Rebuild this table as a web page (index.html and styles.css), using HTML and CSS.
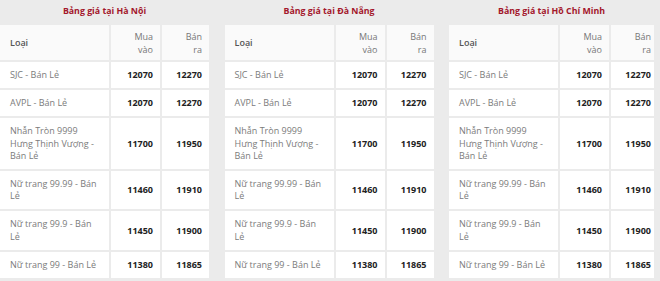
FILE: index.html
```html
<!DOCTYPE html>
<html lang="vi">
<head>
<meta charset="utf-8">
<link rel="stylesheet" href="styles.css">
</head>
<body>
<div class="boards">
  <section class="board">
    <h3 class="board-title">Bảng giá tại Hà Nội</h3>
    <div class="price-grid" role="table">
      <div class="cell head name" role="columnheader">Loại</div>
      <div class="cell head num" role="columnheader">Mua<br>vào</div>
      <div class="cell head num" role="columnheader">Bán<br>ra</div>
      <div class="cell name">SJC - Bán Lẻ</div><div class="cell num val">12070</div><div class="cell num val">12270</div>
      <div class="cell name">AVPL - Bán Lẻ</div><div class="cell num val">12070</div><div class="cell num val">12270</div>
      <div class="cell name">Nhẫn Tròn 9999 Hưng Thịnh Vượng - Bán Lẻ</div><div class="cell num val">11700</div><div class="cell num val">11950</div>
      <div class="cell name">Nữ trang 99.99 - Bán Lẻ</div><div class="cell num val">11460</div><div class="cell num val">11910</div>
      <div class="cell name">Nữ trang 99.9 - Bán Lẻ</div><div class="cell num val">11450</div><div class="cell num val">11900</div>
      <div class="cell name">Nữ trang 99 - Bán Lẻ</div><div class="cell num val">11380</div><div class="cell num val">11865</div>
    </div>
  </section>
  <section class="board">
    <h3 class="board-title">Bảng giá tại Đà Nẵng</h3>
    <div class="price-grid" role="table">
      <div class="cell head name" role="columnheader">Loại</div>
      <div class="cell head num" role="columnheader">Mua<br>vào</div>
      <div class="cell head num" role="columnheader">Bán<br>ra</div>
      <div class="cell name">SJC - Bán Lẻ</div><div class="cell num val">12070</div><div class="cell num val">12270</div>
      <div class="cell name">AVPL - Bán Lẻ</div><div class="cell num val">12070</div><div class="cell num val">12270</div>
      <div class="cell name">Nhẫn Tròn 9999 Hưng Thịnh Vượng - Bán Lẻ</div><div class="cell num val">11700</div><div class="cell num val">11950</div>
      <div class="cell name">Nữ trang 99.99 - Bán Lẻ</div><div class="cell num val">11460</div><div class="cell num val">11910</div>
      <div class="cell name">Nữ trang 99.9 - Bán Lẻ</div><div class="cell num val">11450</div><div class="cell num val">11900</div>
      <div class="cell name">Nữ trang 99 - Bán Lẻ</div><div class="cell num val">11380</div><div class="cell num val">11865</div>
    </div>
  </section>
  <section class="board board-last">
    <h3 class="board-title">Bảng giá tại Hồ Chí Minh</h3>
    <div class="price-grid" role="table">
      <div class="cell head name" role="columnheader">Loại</div>
      <div class="cell head num" role="columnheader">Mua<br>vào</div>
      <div class="cell head num" role="columnheader">Bán<br>ra</div>
      <div class="cell name">SJC - Bán Lẻ</div><div class="cell num val">12070</div><div class="cell num val">12270</div>
      <div class="cell name">AVPL - Bán Lẻ</div><div class="cell num val">12070</div><div class="cell num val">12270</div>
      <div class="cell name">Nhẫn Tròn 9999 Hưng Thịnh Vượng - Bán Lẻ</div><div class="cell num val">11700</div><div class="cell num val">11950</div>
      <div class="cell name">Nữ trang 99.99 - Bán Lẻ</div><div class="cell num val">11460</div><div class="cell num val">11910</div>
      <div class="cell name">Nữ trang 99.9 - Bán Lẻ</div><div class="cell num val">11450</div><div class="cell num val">11900</div>
      <div class="cell name">Nữ trang 99 - Bán Lẻ</div><div class="cell num val">11380</div><div class="cell num val">11865</div>
    </div>
  </section>
</div>
</body>
</html>
```
FILE: styles.css
```css
html, body {
  margin: 0;
  padding: 0;
  background: #ebebeb;
}
body {
  font-family: "Open Sans", "Liberation Sans", sans-serif;
  font-size: 9px;
  color: #777;
}
.boards {
  display: grid;
  grid-template-columns: 209px 209px 205px;
  column-gap: 15.5px;
}
.board {
  min-width: 0;
}
.board-title {
  margin: 0;
  height: 25px;
  line-height: 22px;
  text-align: center;
  font-size: 8.8px;
  font-weight: 700;
  color: #a3172b;
}
.price-grid {
  display: grid;
  grid-template-columns: 109px 49px 1fr;
  gap: 2px;
  background: #ebebeb;
}
.cell {
  display: flex;
  align-items: center;
  background: #fff;
  padding: 7px 7px 7px 10px;
  line-height: 12.2px;
  color: #7b7b7b;
  min-width: 0;
}
.cell.head {
  padding-top: 4.5px;
  padding-bottom: 4.5px;
  line-height: 13px;
  background: #fafafa;
  color: #777;
}
.cell.head.name {
  font-weight: 600;
  color: #555;
}
.cell.num {
  justify-content: flex-end;
  text-align: right;
}
.cell.val {
  font-weight: 700;
  color: #222;
}
.board-last .cell:nth-child(3n) {
  padding-left: 2px;
  padding-right: 3px;
}
```
